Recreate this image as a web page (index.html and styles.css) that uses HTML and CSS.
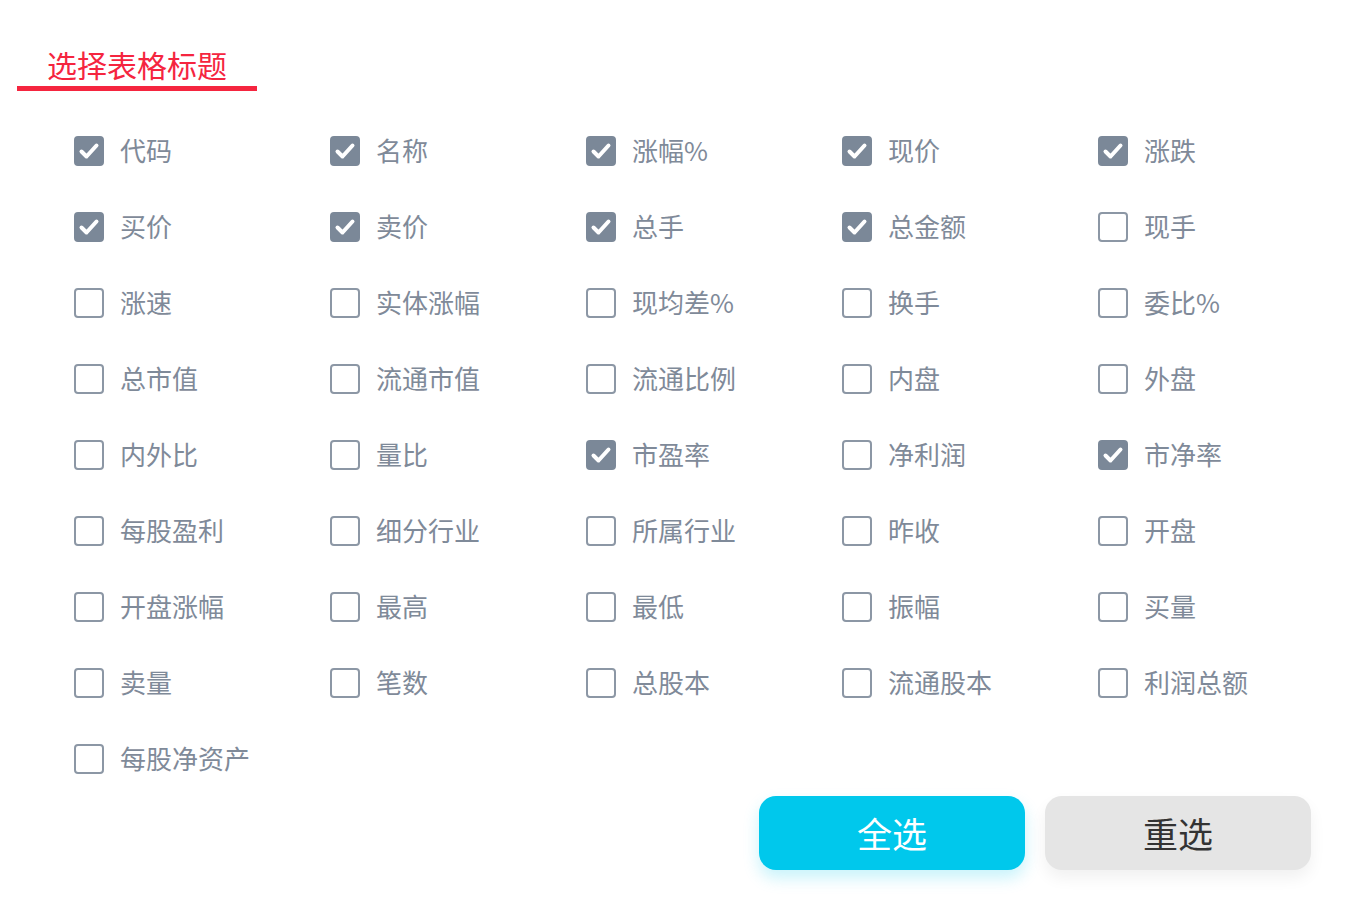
FILE: index.html
```html
<!DOCTYPE html>
<html lang="zh-CN">
<head>
<meta charset="utf-8">
<title>选择表格标题</title>
<link rel="stylesheet" href="styles.css">
</head>
<body>
<div class="page">
  <div class="tab">
    <div class="tab-title">选择表格标题</div>
    <div class="tab-line"></div>
  </div>
  <div class="grid">
    <label class="item"><span class="box on"><svg viewBox="0 0 30 30"><path d="M7.5 15.5 L12.5 20.5 L22.5 9.5" /></svg></span><span class="txt">代码</span></label>
    <label class="item"><span class="box on"><svg viewBox="0 0 30 30"><path d="M7.5 15.5 L12.5 20.5 L22.5 9.5" /></svg></span><span class="txt">名称</span></label>
    <label class="item"><span class="box on"><svg viewBox="0 0 30 30"><path d="M7.5 15.5 L12.5 20.5 L22.5 9.5" /></svg></span><span class="txt">涨幅%</span></label>
    <label class="item"><span class="box on"><svg viewBox="0 0 30 30"><path d="M7.5 15.5 L12.5 20.5 L22.5 9.5" /></svg></span><span class="txt">现价</span></label>
    <label class="item"><span class="box on"><svg viewBox="0 0 30 30"><path d="M7.5 15.5 L12.5 20.5 L22.5 9.5" /></svg></span><span class="txt">涨跌</span></label>

    <label class="item"><span class="box on"><svg viewBox="0 0 30 30"><path d="M7.5 15.5 L12.5 20.5 L22.5 9.5" /></svg></span><span class="txt">买价</span></label>
    <label class="item"><span class="box on"><svg viewBox="0 0 30 30"><path d="M7.5 15.5 L12.5 20.5 L22.5 9.5" /></svg></span><span class="txt">卖价</span></label>
    <label class="item"><span class="box on"><svg viewBox="0 0 30 30"><path d="M7.5 15.5 L12.5 20.5 L22.5 9.5" /></svg></span><span class="txt">总手</span></label>
    <label class="item"><span class="box on"><svg viewBox="0 0 30 30"><path d="M7.5 15.5 L12.5 20.5 L22.5 9.5" /></svg></span><span class="txt">总金额</span></label>
    <label class="item"><span class="box"></span><span class="txt">现手</span></label>

    <label class="item"><span class="box"></span><span class="txt">涨速</span></label>
    <label class="item"><span class="box"></span><span class="txt">实体涨幅</span></label>
    <label class="item"><span class="box"></span><span class="txt">现均差%</span></label>
    <label class="item"><span class="box"></span><span class="txt">换手</span></label>
    <label class="item"><span class="box"></span><span class="txt">委比%</span></label>

    <label class="item"><span class="box"></span><span class="txt">总市值</span></label>
    <label class="item"><span class="box"></span><span class="txt">流通市值</span></label>
    <label class="item"><span class="box"></span><span class="txt">流通比例</span></label>
    <label class="item"><span class="box"></span><span class="txt">内盘</span></label>
    <label class="item"><span class="box"></span><span class="txt">外盘</span></label>

    <label class="item"><span class="box"></span><span class="txt">内外比</span></label>
    <label class="item"><span class="box"></span><span class="txt">量比</span></label>
    <label class="item"><span class="box on"><svg viewBox="0 0 30 30"><path d="M7.5 15.5 L12.5 20.5 L22.5 9.5" /></svg></span><span class="txt">市盈率</span></label>
    <label class="item"><span class="box"></span><span class="txt">净利润</span></label>
    <label class="item"><span class="box on"><svg viewBox="0 0 30 30"><path d="M7.5 15.5 L12.5 20.5 L22.5 9.5" /></svg></span><span class="txt">市净率</span></label>

    <label class="item"><span class="box"></span><span class="txt">每股盈利</span></label>
    <label class="item"><span class="box"></span><span class="txt">细分行业</span></label>
    <label class="item"><span class="box"></span><span class="txt">所属行业</span></label>
    <label class="item"><span class="box"></span><span class="txt">昨收</span></label>
    <label class="item"><span class="box"></span><span class="txt">开盘</span></label>

    <label class="item"><span class="box"></span><span class="txt">开盘涨幅</span></label>
    <label class="item"><span class="box"></span><span class="txt">最高</span></label>
    <label class="item"><span class="box"></span><span class="txt">最低</span></label>
    <label class="item"><span class="box"></span><span class="txt">振幅</span></label>
    <label class="item"><span class="box"></span><span class="txt">买量</span></label>

    <label class="item"><span class="box"></span><span class="txt">卖量</span></label>
    <label class="item"><span class="box"></span><span class="txt">笔数</span></label>
    <label class="item"><span class="box"></span><span class="txt">总股本</span></label>
    <label class="item"><span class="box"></span><span class="txt">流通股本</span></label>
    <label class="item"><span class="box"></span><span class="txt">利润总额</span></label>

    <label class="item"><span class="box"></span><span class="txt">每股净资产</span></label>
  </div>
  <div class="actions">
    <button class="btn btn-primary">全选</button>
    <button class="btn btn-default">重选</button>
  </div>
</div>
</body>
</html>
```

FILE: styles.css
```css
html, body {
  margin: 0;
  padding: 0;
  background: #ffffff;
}
body {
  font-family: "Noto Sans CJK SC", "Noto Sans", sans-serif;
  width: 1347px;
  height: 906px;
  overflow: hidden;
}
.page {
  padding-top: 44px;
}
.tab {
  margin-left: 17px;
  width: 240px;
}
.tab-title {
  color: #f5253f;
  font-size: 30px;
  line-height: 40px;
  height: 40px;
  text-align: center;
}
.tab-line {
  margin-top: 2px;
  height: 5px;
  background: #f5253f;
}
.grid {
  margin-top: 22px;
  margin-left: 74px;
  display: grid;
  grid-template-columns: repeat(5, 256px);
  grid-auto-rows: 76px;
}
.item {
  display: flex;
  align-items: center;
  gap: 16px;
  cursor: pointer;
}
.box {
  width: 30px;
  height: 30px;
  box-sizing: border-box;
  border: 2px solid #8c97a5;
  border-radius: 4px;
  background: #ffffff;
  flex: none;
  position: relative;
}
.box.on {
  background: #7b8898;
  border-color: #7b8898;
}
.box svg {
  position: absolute;
  left: -2px;
  top: -2px;
  width: 30px;
  height: 30px;
}
.box svg path {
  fill: none;
  stroke: #ffffff;
  stroke-width: 4;
  stroke-linecap: round;
  stroke-linejoin: round;
}
.txt {
  color: #7f8a99;
  font-size: 26px;
  line-height: 30px;
  white-space: nowrap;
  position: relative;
  top: -1px;
}
.actions {
  margin-top: -1px;
  display: flex;
  justify-content: flex-end;
  gap: 20px;
  padding-right: 36px;
}
.btn {
  width: 266px;
  height: 74px;
  border: none;
  border-radius: 17px;
  font-family: "Noto Sans CJK SC", "Noto Sans", sans-serif;
  font-size: 35px;
  line-height: 72px;
  padding: 0;
  cursor: pointer;
}
.btn-primary {
  background: #00c8ec;
  color: #ffffff;
  box-shadow: 0 8px 16px rgba(0, 200, 236, 0.22);
}
.btn-default {
  background: #e5e5e5;
  color: #333333;
  box-shadow: 0 8px 16px rgba(0, 0, 0, 0.06);
}
```
